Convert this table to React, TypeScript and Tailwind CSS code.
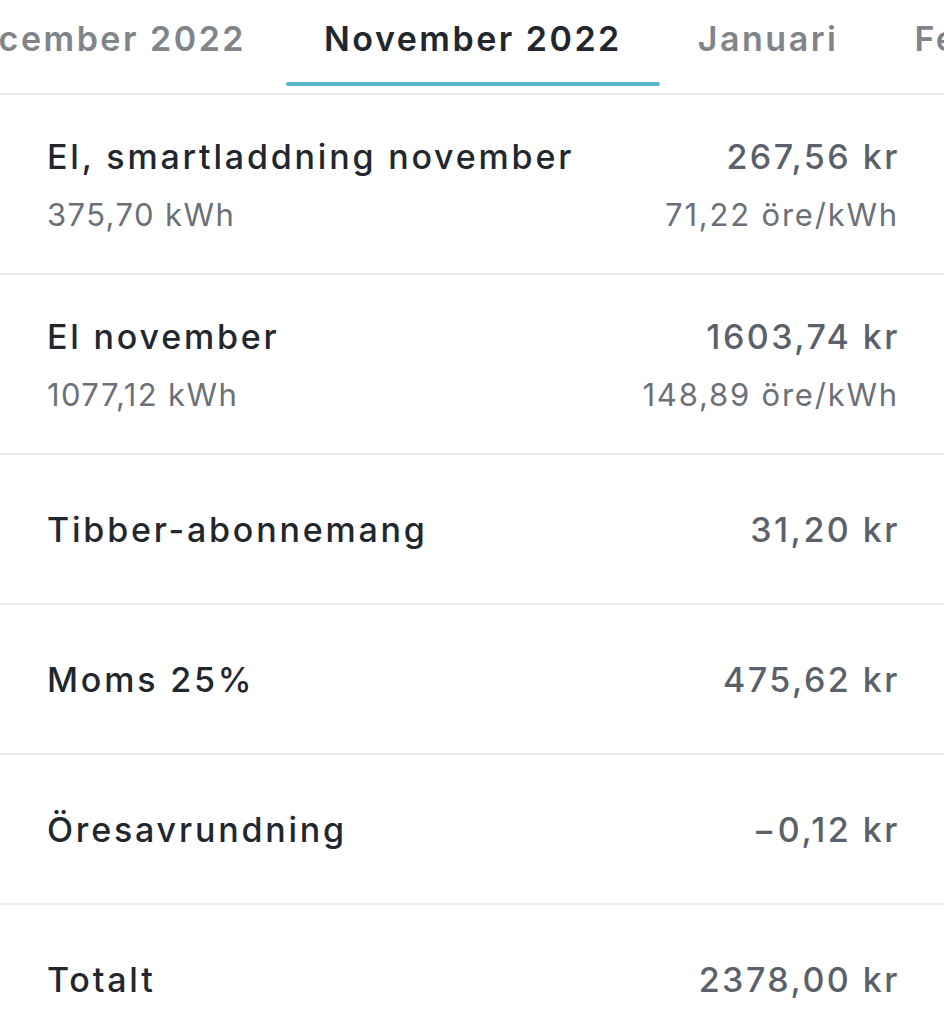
const rows = [
  { title: "El, smartladdning november", amount: "267,56 kr", sub: "375,70 kWh", rate: "71,22 öre/kWh" },
  { title: "El november", amount: "1603,74 kr", sub: "1077,12 kWh", rate: "148,89 öre/kWh" },
  { title: "Tibber-abonnemang", amount: "31,20 kr" },
  { title: "Moms 25%", amount: "475,62 kr" },
  { title: "Öresavrundning", amount: "−0,12 kr" },
  { title: "Totalt", amount: "2378,00 kr" },
];

export default function App() {
  return (
    <div className="w-[944px] h-[1024px] overflow-hidden bg-white" style={{ fontFamily: "Inter, 'Noto Sans', sans-serif" }}>
      {/* month tabs */}
      <div className="flex h-[95px] overflow-hidden border-b-2 border-[#ececec]">
        <div className="w-[286px] shrink-0 flex justify-end overflow-hidden">
          <div className="shrink-0 px-[40px] pt-[13px] text-[34px] tracking-[2.5px] font-semibold text-[#80858c] whitespace-nowrap">December 2022</div>
        </div>
        <div className="shrink-0 relative px-[38px] pt-[13px] text-[34px] tracking-[2.5px] font-semibold text-[#22272e] whitespace-nowrap">
          November 2022
          <div className="absolute left-0 right-0 bottom-[7px] h-[4px] rounded-full bg-[#5ab4cb]" />
        </div>
        <div className="shrink-0 px-[38px] pt-[13px] text-[34px] tracking-[2.5px] font-semibold text-[#80858c] whitespace-nowrap">Januari</div>
        <div className="shrink-0 px-[38px] pt-[13px] text-[34px] tracking-[2.5px] font-semibold text-[#80858c] whitespace-nowrap">Februari</div>
      </div>

      {rows.map((r, i) => (
        <div
          key={i}
          className={
            "px-[47px] border-b-2 border-[#ececec] " +
            (r.sub ? "pt-[39px] pb-[40px]" : "py-[52px]")
          }
        >
          <div className="flex justify-between items-center h-[44px]">
            <span className="text-[34px] tracking-[2.8px] font-medium text-[#22272e]">{r.title}</span>
            <span className="-mr-[3px] text-[34px] tracking-[2.5px] font-medium text-[#5b616b]">{r.amount}</span>
          </div>
          {r.sub && (
            <div className="flex justify-between items-center h-[36px] mt-[19px]">
              <span className="text-[31px] tracking-[1.4px] text-[#6c7179]">{r.sub}</span>
              <span className="-mr-[2px] text-[31px] tracking-[1.8px] text-[#6c7179]">{r.rate}</span>
            </div>
          )}
        </div>
      ))}
    </div>
  );
}
